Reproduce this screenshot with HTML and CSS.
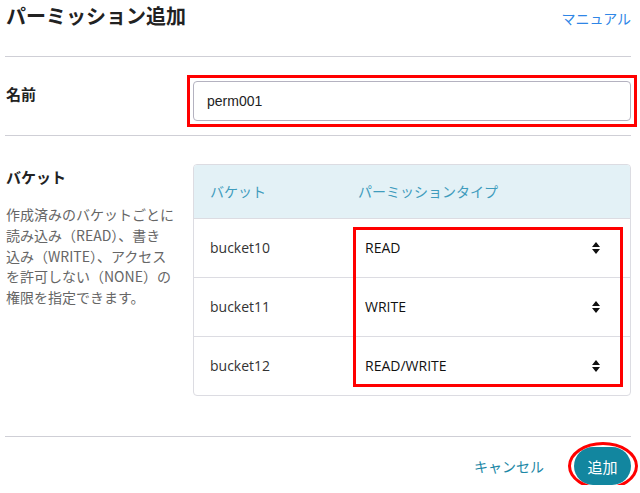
FILE: index.html
```html
<!DOCTYPE html>
<html lang="ja">
<head>
<meta charset="utf-8">
<title>パーミッション追加</title>
<link rel="stylesheet" href="styles.css">
</head>
<body>
<div class="page">
  <header class="head">
    <h1 class="title">パーミッション追加</h1>
    <a class="manual" href="#">マニュアル</a>
  </header>

  <section class="row row-name">
    <div class="label">名前</div>
    <div class="field">
      <div class="annot-box">
        <div class="input">perm001</div>
      </div>
    </div>
  </section>

  <section class="row row-bucket">
    <div class="side">
      <div class="label label-bucket">バケット</div>
      <p class="desc">作成済みのバケットごとに<br>読み込み（READ）、書き<br>込み（WRITE）、アクセス<br>を許可しない（NONE）の<br>権限を指定できます。</p>
    </div>
    <div class="table-wrap">
      <table class="tbl">
        <thead>
          <tr><th class="c1">バケット</th><th class="c2">パーミッションタイプ</th></tr>
        </thead>
        <tbody>
          <tr><td class="c1">bucket10</td><td class="c2"><div class="sel"><span>READ</span><svg class="caret" width="8" height="12" viewBox="0 0 8 12"><path d="M4 0 L8 5 L0 5 Z M0 7 L8 7 L4 12 Z" fill="#111"/></svg></div></td></tr>
          <tr><td class="c1">bucket11</td><td class="c2"><div class="sel"><span>WRITE</span><svg class="caret" width="8" height="12" viewBox="0 0 8 12"><path d="M4 0 L8 5 L0 5 Z M0 7 L8 7 L4 12 Z" fill="#111"/></svg></div></td></tr>
          <tr><td class="c1">bucket12</td><td class="c2"><div class="sel"><span>READ/WRITE</span><svg class="caret" width="8" height="12" viewBox="0 0 8 12"><path d="M4 0 L8 5 L0 5 Z M0 7 L8 7 L4 12 Z" fill="#111"/></svg></div></td></tr>
        </tbody>
      </table>
      <div class="annot-sel"></div>
    </div>
  </section>

  <footer class="foot">
    <a class="cancel" href="#">キャンセル</a>
    <div class="btn-wrap">
      <button class="btn" type="button">追加</button>
      <span class="annot-ellipse"></span>
    </div>
  </footer>
</div>
</body>
</html>
```

FILE: styles.css
```css
* { box-sizing: border-box; }
html, body { margin: 0; padding: 0; background: #fff; }
body {
  font-family: "Open Sans", "Noto Sans CJK JP", sans-serif;
  color: #222;
  font-size: 14px;
}
.page {
  margin: 0 9px 0 5px;
  width: 626px;
}
.head {
  display: flex;
  justify-content: space-between;
  align-items: flex-start;
  height: 57px;
  border-bottom: 1px solid #cfcfd6;
}
.title {
  margin: 0;
  padding: 1px 0 0 1px;
  font-family: "Noto Sans CJK JP", sans-serif;
  font-size: 20px;
  font-weight: 700;
  line-height: 30px;
  color: #222;
}
.manual {
  margin-top: 7px;
  font-family: "Noto Sans CJK JP", sans-serif;
  font-size: 14px;
  line-height: 22px;
  color: #2f86e6;
  text-decoration: none;
}
.row {
  display: grid;
  grid-template-columns: 188px 1fr;
  border-bottom: 1px solid #cfcfd6;
}
.row-name { padding: 18px 0 8px; }
.label {
  padding-left: 1px;
  font-family: "Noto Sans CJK JP", sans-serif;
  font-weight: 700;
  font-size: 15px;
  line-height: 24px;
  color: #222;
}
.row-name .label { padding-top: 7px; }
.annot-box {
  margin: 0 -6px;
  border: 3px solid #f00;
  padding: 3px;
}
.input {
  height: 40px;
  border: 1px solid #b4b2c0;
  border-radius: 4px;
  padding-left: 13px;
  font-family: "Liberation Sans", Arial, sans-serif;
  font-size: 14px;
  line-height: 38px;
  color: #222;
}
.row-bucket { padding: 28px 0 40px; }
.label-bucket { line-height: 26px; }
.desc {
  margin: 14px 0 0;
  padding-left: 1px;
  font-family: "Noto Sans CJK JP", sans-serif;
  font-size: 14px;
  line-height: 20.8px;
  color: #666;
  white-space: nowrap;
}
.table-wrap {
  position: relative;
  border: 1px solid #dcdce2;
  border-radius: 4px;
  overflow: hidden;
}
.tbl {
  width: 100%;
  border-collapse: collapse;
  font-size: 14px;
}
.tbl th {
  height: 53px;
  background: #e3f1f6;
  text-align: left;
  font-weight: 400;
  font-family: "Noto Sans CJK JP", sans-serif;
  font-size: 14px;
  color: #3f9cbd;
  padding: 0;
}
.tbl td {
  height: 59px;
  border-top: 1px solid #dcdce2;
  padding: 0;
  color: #333;
}
.c1 { width: 148px; padding-left: 16px !important; }
.c2 { padding-left: 16px !important; padding-right: 30px !important; }
.sel {
  display: flex;
  justify-content: space-between;
  align-items: center;
  padding-left: 7px;
  color: #111;
}
.caret { display: block; }
.annot-sel {
  position: absolute;
  left: 159px;
  top: 62px;
  width: 270px;
  height: 160px;
  border: 3px solid #f00;
}
.foot {
  display: flex;
  justify-content: flex-end;
  align-items: center;
  padding-top: 10px;
  gap: 30px;
}
.cancel {
  font-family: "Noto Sans CJK JP", sans-serif;
  font-size: 14px;
  color: #1c87a6;
  text-decoration: none;
}
.btn-wrap { position: relative; }
.btn {
  display: block;
  width: 57px;
  height: 38px;
  border: 0;
  border-radius: 19px;
  background: #12869f;
  color: #fff;
  font-family: "Noto Sans CJK JP", sans-serif;
  font-size: 15px;
  padding: 0;
}
.annot-ellipse {
  position: absolute;
  left: -6px;
  right: -7px;
  top: -5px;
  bottom: -5px;
  border: 3px solid #f00;
  border-radius: 50%;
}
```
